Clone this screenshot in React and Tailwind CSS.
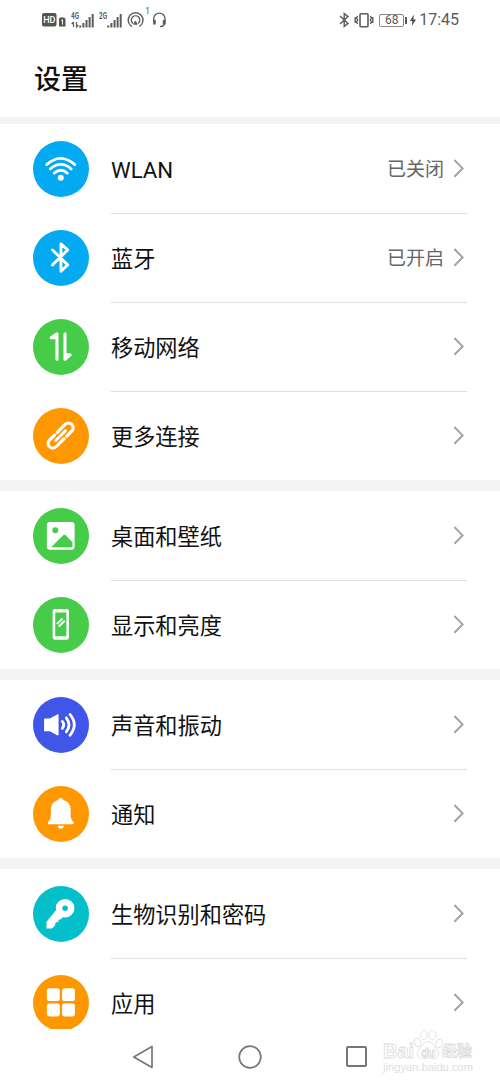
import React from "react";

const groups = [
  [
    { label: "WLAN", icon: WifiIcon, color: "bg-[#03a9f1]", status: "已关闭" },
    { label: "蓝牙", icon: BluetoothIcon, color: "bg-[#03a9f1]", status: "已开启" },
    { label: "移动网络", icon: DataIcon, color: "bg-[#46cc49]" },
    { label: "更多连接", icon: LinkIcon, color: "bg-[#ff9800]" }
  ],
  [
    { label: "桌面和壁纸", icon: PictureIcon, color: "bg-[#46cc49]" },
    { label: "显示和亮度", icon: DisplayIcon, color: "bg-[#46cc49]" }
  ],
  [
    { label: "声音和振动", icon: SoundIcon, color: "bg-[#3f56e8]" },
    { label: "通知", icon: BellIcon, color: "bg-[#ff9800]" }
  ],
  [
    { label: "生物识别和密码", icon: KeyIcon, color: "bg-[#03bfca]" },
    { label: "应用", icon: AppsIcon, color: "bg-[#ff9800]" }
  ]
];

function Glyph({ children }) {
  return (
    <svg
      viewBox="0 0 56 56"
      className="size-full"
      fill="none"
      stroke="white"
      strokeLinecap="round"
      strokeLinejoin="round"
    >
      {children}
    </svg>
  );
}

function WifiIcon() {
  return (
    <Glyph>
      <g strokeWidth="2.8">
        <path d="M13.8 23.8 Q28 11.2 42.2 23.8" />
        <path d="M17.4 28.2 Q28 19 38.6 28.2" />
        <path d="M21.4 32.4 Q28 26.6 34.6 32.4" />
      </g>
      <circle cx="28" cy="37" r="3" fill="white" stroke="none" />
    </Glyph>
  );
}

function BluetoothIcon() {
  return (
    <Glyph>
      <path d="M19.7 20.1 L35 35.2 L28.2 41.6 V14 L35 20.1 L19.7 35.2" strokeWidth="2.9" />
    </Glyph>
  );
}

function DataIcon() {
  return (
    <Glyph>
      <path d="M24.2 40.6 V14.8 L18.4 19 H23.5 M32.3 14.8 V40.6 L37.5 36.2 H33.2" strokeWidth="3.1" />
    </Glyph>
  );
}

function LinkIcon() {
  return (
    <Glyph>
      <g transform="rotate(-45 28 28)" strokeWidth="3.2">
        <path d="M24 23.1 H16.8 A4.7 4.7 0 0 0 16.8 32.5 H28.4" />
        <path d="M32 32.5 H39.2 A4.7 4.7 0 0 0 39.2 23.1 H27.6" />
        <path d="M21 27.8 H35" strokeWidth="2.8" />
      </g>
    </Glyph>
  );
}

function PictureIcon() {
  return (
    <Glyph>
      <path
        d="M17 14 H39 Q42 14 42 17 V39 Q42 42 39 42 H17 Q14 42 14 39 V17 Q14 14 17 14 Z M22.5 19.4 A3 3 0 1 0 22.5 25.4 A3 3 0 1 0 22.5 19.4 Z M18.3 39.6 H38.5 Q39.8 39.6 39.8 38.3 V34.6 L33 27.6 Q31.7 26.4 30.4 27.6 Z"
        fill="white"
        fillRule="evenodd"
        stroke="none"
      />
    </Glyph>
  );
}

function DisplayIcon() {
  return (
    <Glyph>
      <path
        d="M22.4 12.2 H33.7 Q36.3 12.2 36.3 14.7 V40.7 Q36.3 43.1 33.7 43.1 H22.4 Q19.8 43.1 19.8 40.7 V14.7 Q19.8 12.2 22.4 12.2 Z M22.4 15.7 V39.5 H33.7 V15.7 Z"
        fill="white"
        fillRule="evenodd"
        stroke="none"
      />
      <path d="M24.6 26.6 L29.2 22.2 M26.6 29.3 L31.5 24.4" strokeWidth="2" />
    </Glyph>
  );
}

function SoundIcon() {
  return (
    <Glyph>
      <path d="M11.8 22.2 H17.2 L25.2 17.9 V38.2 L17.2 34 H11.8 Z" fill="white" strokeWidth="1.2" />
      <g strokeWidth="2.8">
        <path d="M29.6 24.6 Q32.4 28 29.6 31.6" />
        <path d="M33.6 21 Q39 28 33.6 35.2" />
        <path d="M37.3 17.6 Q46 28 37.3 38.6" />
      </g>
    </Glyph>
  );
}

function BellIcon() {
  return (
    <Glyph>
      <path
        d="M28 12 Q30.2 12 30.6 14 C36 15.5 38 19.5 38 24.2 V30.7 Q38 33.7 40.8 36.3 Q41.6 38.5 40 38.5 H16 Q14.4 38.5 15.2 36.3 Q18 33.7 18 30.7 V24.2 C18 19.5 20 15.5 25.4 14 Q25.8 12 28 12 Z M24.9 40.1 H31.1 Q30.6 43.1 28 43.1 Q25.4 43.1 24.9 40.1 Z"
        fill="white"
        stroke="none"
      />
    </Glyph>
  );
}

function KeyIcon() {
  return (
    <Glyph>
      <circle cx="32.4" cy="22.4" r="6.1" strokeWidth="6.6" />
      <path
        d="M23.6 24.8 L30 31 L27.2 33.4 L25.4 33 L25 35.8 L22.2 36.4 L21.8 39.2 L18.8 42.4 L14.2 42.4 V36.4 Z"
        fill="white"
        strokeWidth="1.2"
      />
    </Glyph>
  );
}

function AppsIcon() {
  return (
    <Glyph>
      <g fill="white" stroke="none">
        <rect x="14" y="13.3" width="13" height="13" rx="2.4" />
        <rect x="29.3" y="13.3" width="13" height="13" rx="2.4" />
        <rect x="14" y="28.8" width="13" height="13" rx="2.4" />
        <rect x="29.3" y="28.8" width="13" height="13" rx="2.4" />
      </g>
    </Glyph>
  );
}

function Signal({ type, arrows }) {
  return (
    <svg width="24" height="18" viewBox="0 0 24 18" fill="#5c5c5c">
      <text
        x="0"
        y="8.4"
        textLength="8"
        lengthAdjust="spacingAndGlyphs"
        className="font-['Roboto',sans-serif] text-[9px] font-bold"
      >
        {type}
      </text>
      {arrows ? (
        <path d="M2.5 11 V16 M0.7 13 L2.5 11 M5.5 11 V16 L7.3 14" stroke="#5c5c5c" strokeWidth="1.2" fill="none" />
      ) : null}
      <path d="M8.3 14.5 h2 v2 h-2z M11.4 12 h2 v4.5 h-2z M14.5 9 h2 v7.5 h-2z M17.6 6 h2 v10.5 h-2z M20.7 3 h2 v13.5 h-2z" />
    </svg>
  );
}

function StatusBar() {
  return (
    <div className="flex h-10 items-center justify-between pr-[41px] pl-[42px] text-[#5c5c5c]">
      <div className="flex h-[18px] items-center">
        <svg width="29" height="18" viewBox="0 0 29 18">
          <rect x="0" y="2" width="14.5" height="13.5" rx="2" fill="#555" />
          <text x="1.3" y="12" textLength="12" fill="white" className="font-['Roboto',sans-serif] text-[9px] font-medium">
            HD
          </text>
          <path d="M18 6.5 H22 L23.5 8 V15.5 H17 V7.5 Z" fill="#555" />
          <path d="M19.3 9.4 L20.5 8.8 V13.6" stroke="white" fill="none" />
        </svg>
        <Signal type="4G" arrows />
        <div className="w-1" />
        <Signal type="2G" />
        <svg
          width="18"
          height="18"
          viewBox="0 0 18 18"
          className="ml-1"
          fill="none"
          stroke="#5c5c5c"
          strokeWidth="1.4"
          strokeLinecap="round"
        >
          <path d="M4.4 15.2 A7.4 7.4 0 1 1 12.8 15.2" />
          <path d="M5.6 12 A4.2 4.2 0 1 1 11.6 12" />
          <path d="M8.6 10.4 L10.2 13.2 H7 Z" fill="#5c5c5c" strokeWidth="1" />
        </svg>
        <span className="-mt-4 w-[6px] text-[9px]">1</span>
        <svg width="15" height="18" viewBox="0 0 15 18" className="ml-px" fill="none" stroke="#5c5c5c" strokeWidth="1.4">
          <path d="M1.7 11 V7.8 A5.6 5.6 0 0 1 13 7.8 V11 Q13 15.4 8 15.6" />
          <path d="M1.2 9 H3.8 V13.4 H1.2 Z M10.8 9 H13.4 V13.4 H10.8 Z" fill="#5c5c5c" stroke="none" />
        </svg>
      </div>
      <div className="flex items-center">
        <svg width="11" height="18" viewBox="0 0 11 18" fill="none" stroke="#5c5c5c" strokeWidth="1.4">
          <path d="M1 5 L9 12.4 L5.2 15.6 V2.4 L9 5.6 L1 13" />
        </svg>
        <svg width="20" height="18" viewBox="0 0 20 18" className="ml-1" fill="none" stroke="#5c5c5c">
          <rect x="6" y="2.7" width="8" height="13" rx="1" strokeWidth="1.6" />
          <path
            d="M3.6 5 L2.6 7 L3.6 9 L2.6 11 L3.6 13 M1.2 6 V12 M16.4 5 L17.4 7 L16.4 9 L17.4 11 L16.4 13 M18.8 6 V12"
            strokeWidth="1.4"
          />
        </svg>
        <div className="ml-[5px] flex h-[13px] w-[25px] items-center justify-center rounded-[2px] border border-[#888] text-[12px] leading-none">
          68
        </div>
        <div className="ml-px h-[7px] w-[2px] bg-[#5c5c5c]" />
        <svg width="8" height="14" viewBox="0 0 8 14" className="ml-[2px]" fill="#4c4c4c">
          <path d="M4.8 1.5 L1 8 H3.4 L2.8 13 L7 6.5 H4.4 Z" />
        </svg>
        <span className="ml-[2px] text-[16px] leading-none">17:45</span>
      </div>
    </div>
  );
}

function SettingRow({ item, divider }) {
  const Icon = item.icon;

  return (
    <div className="flex h-[89px] shrink-0 pr-[33px] pl-[33px]">
      <div className={`mt-[17px] size-[55.5px] shrink-0 rounded-full ${item.color}`}>
        <Icon />
      </div>
      <div
        className={`ml-[22.5px] flex h-[90px] flex-1 items-center border-b ${divider ? "border-[#dedede]" : "border-transparent"}`}
      >
        <span className="pt-[2px] text-[22.2px] leading-8 text-[#111]">{item.label}</span>
        <span className="ml-auto pt-[3px] text-[19px] leading-8 text-[#666]">{item.status}</span>
        <svg
          width="14"
          height="22"
          viewBox="0 0 14 22"
          className="mr-[1px] ml-[8px]"
          fill="none"
          stroke="#a3a3a3"
          strokeWidth="2"
        >
          <path d="M2.4 2 L10.6 10.4 L2.4 18.8" />
        </svg>
      </div>
    </div>
  );
}

function NavBar() {
  return (
    <div className="flex h-[55px] items-center bg-white pl-[132px]">
      <svg width="22" height="26" viewBox="0 0 22 26" fill="none" stroke="#777" strokeWidth="1.7" strokeLinejoin="round">
        <path d="M20 2.5 V23.5 L1.8 13 Z" />
      </svg>
      <svg width="24" height="24" viewBox="0 0 24 24" className="ml-[84px]" fill="none" stroke="#777" strokeWidth="1.7">
        <circle cx="12" cy="12" r="10.8" />
      </svg>
      <div className="ml-[84px] size-[21px] rounded-[2px] border-2 border-[#777]" />
    </div>
  );
}

function Watermark() {
  return (
    <svg
      width="96"
      height="54"
      viewBox="0 -3 96 54"
      className="absolute right-[21px] bottom-[2px]"
      fill="white"
      stroke="#dcdcdc"
      strokeWidth="0.8"
    >
      <text x="0" y="26.5" textLength="31" className="font-['Liberation_Sans',sans-serif] text-[20px] font-bold">
        Bai
      </text>
      <path d="M45 10.5 C50 10.5 51 15.5 54 18.5 C58 23.5 54 28.5 49 27.5 Q45 26.5 41 27.5 C35 28.5 32 23.5 36 18.5 C39 15.5 40 10.5 45 10.5 Z" />
      <ellipse cx="41" cy="4" rx="3.4" ry="4.8" />
      <ellipse cx="49.5" cy="4" rx="3.4" ry="4.8" />
      <ellipse cx="34.5" cy="11.5" rx="3.1" ry="4.4" transform="rotate(-15 34.5 11.5)" />
      <ellipse cx="56" cy="12.5" rx="3.1" ry="4.4" transform="rotate(15 56 12.5)" />
      <text x="38" y="25.5" textLength="14" className="font-['Liberation_Sans',sans-serif] text-[12px] font-bold">
        du
      </text>
      <text x="59" y="25" textLength="30" className="font-['Noto_Sans_CJK_SC',sans-serif] text-[15px] font-bold">
        经验
      </text>
      <text
        x="0"
        y="40"
        textLength="90"
        lengthAdjust="spacingAndGlyphs"
        fill="#dedede"
        stroke="none"
        className="font-['Liberation_Sans',sans-serif] text-[10.5px]"
      >
        jingyan.baidu.com
      </text>
    </svg>
  );
}

export default function App() {
  return (
    <div className="relative flex h-[1084px] w-[500px] flex-col overflow-hidden bg-white font-['Roboto','Noto_Sans_CJK_SC',sans-serif]">
      <StatusBar />
      <h1 className="h-[77px] pt-[20px] pl-[34px] text-[27px] leading-10 font-medium text-[#111]">设置</h1>
      <div className="h-[7px] shrink-0 bg-[#f3f3f3]" />
      <div className="flex h-[905px] shrink-0 flex-col gap-[11px] overflow-hidden bg-[#f3f3f3]">
        {groups.map((items, groupIndex) => (
          <div key={groupIndex} className="shrink-0 bg-white">
            {items.map((item, index) => (
              <SettingRow key={item.label} item={item} divider={index < items.length - 1} />
            ))}
          </div>
        ))}
      </div>
      <NavBar />
      <Watermark />
    </div>
  );
}
